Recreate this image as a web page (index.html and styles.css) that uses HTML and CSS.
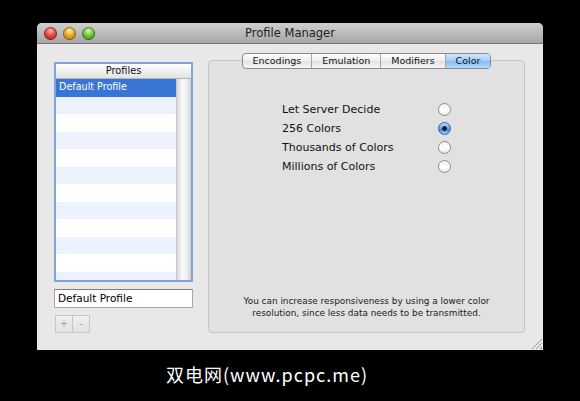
FILE: index.html
```html
<!DOCTYPE html>
<html>
<head>
    <title>Profile Manager</title>
    <link rel="stylesheet" href="styles.css">
</head>
<body>
    <div class="window">
        <div class="titlebar">
            <div class="lights">
                <span class="light red"></span>
                <span class="light yellow"></span>
                <span class="light green"></span>
            </div>
            <div class="title">Profile Manager</div>
            <div></div>
        </div>
        <div class="content">
            <div class="sidebar">
                <div class="list">
                    <div class="list-head">Profiles</div>
                    <div class="list-body">
                        <div class="rows">
                            <div class="row selected">Default Profile</div>
                            <div class="row"></div>
                            <div class="row"></div>
                            <div class="row"></div>
                            <div class="row"></div>
                            <div class="row"></div>
                            <div class="row"></div>
                            <div class="row"></div>
                            <div class="row"></div>
                            <div class="row"></div>
                            <div class="row"></div>
                            <div class="row"></div>
                        </div>
                        <div class="scroll"></div>
                    </div>
                </div>
                <div class="field">Default Profile</div>
                <div class="buttons">
                    <span class="btn">+</span>
                    <span class="btn">-</span>
                </div>
            </div>
            <div class="main">
                <div class="tabs">
                    <span class="tab">Encodings</span>
                    <span class="tab">Emulation</span>
                    <span class="tab">Modifiers</span>
                    <span class="tab active">Color</span>
                </div>
                <div class="panel">
                    <div class="options">
                        <div class="option"><span>Let Server Decide</span><span class="radio"></span></div>
                        <div class="option"><span>256 Colors</span><span class="radio checked"></span></div>
                        <div class="option"><span>Thousands of Colors</span><span class="radio"></span></div>
                        <div class="option"><span>Millions of Colors</span><span class="radio"></span></div>
                    </div>
                    <p class="note">You can increase responsiveness by using a lower color<br>resolution, since less data needs to be transmitted.</p>
                </div>
            </div>
        </div>
        <!-- resize grip sits on the window corner -->
        <div class="grip"></div>
    </div>
    <div class="caption">双电网(www.pcpc.me)</div>
</body>
</html>
```

FILE: styles.css
```css
body {
    margin: 0;
    background-color: #000;
    font-family: "DejaVu Sans", sans-serif;
    color: #111;
}

.window {
    position: relative;
    margin: 23px 0 0 37px;
    width: 506px;
    height: 327px;
    background-color: #e8e8e8;
    border-radius: 5px 5px 0 0;
    overflow: hidden;
}

.titlebar {
    height: 20px;
    display: grid;
    grid-template-columns: 1fr auto 1fr;
    align-items: center;
    background: linear-gradient(#cfcfcf, #a7a7a7);
    border-bottom: 1px solid #777;
}

.lights {
    display: flex;
    gap: 6px;
    padding-left: 7px;
}

.light {
    width: 13px;
    height: 13px;
    border-radius: 50%;
    box-shadow: inset 0 0 0 1px rgba(0, 0, 0, 0.35);
}

.red {
    background: radial-gradient(circle at 50% 30%, #ffb3a8 0, #e0463c 45%, #a51d14 100%);
}

.yellow {
    background: radial-gradient(circle at 50% 30%, #fff0a8 0, #e3a52a 45%, #a96a0a 100%);
}

.green {
    background: radial-gradient(circle at 50% 30%, #d8f7a8 0, #70c23c 45%, #3b7d14 100%);
}

.title {
    font-size: 11.5px;
    color: #222;
}

.content {
    display: flex;
    padding: 9px 18px 0 17px;
}

.sidebar {
    width: 139px;
    padding-top: 9px;
}

.list {
    height: 216px;
    border: 2px solid #7ea6dc;
    display: flex;
    flex-direction: column;
    background-color: #fff;
}

.list-head {
    height: 14px;
    line-height: 14px;
    text-align: center;
    font-size: 9.8px;
    background: linear-gradient(#fff, #e2e2e2);
    border-bottom: 1px solid #b4b4b4;
}

.list-body {
    flex: 1;
    display: flex;
    overflow: hidden;
}

.rows {
    flex: 1;
}

.row {
    height: 17.5px;
    line-height: 16px;
    padding-left: 3px;
    font-size: 9.6px;
}

.row:nth-child(even) {
    background-color: #edf3fe;
}

.row.selected {
    background-color: #3875d7;
    color: #fff;
}

.scroll {
    width: 14px;
    background: linear-gradient(to right, #d8d8d8, #fafafa 40%, #f0f0f0 70%, #d0d0d0);
    border-left: 1px solid #c8c8c8;
}

.field {
    margin-top: 7px;
    height: 17px;
    line-height: 17px;
    padding-left: 3px;
    font-size: 10.5px;
    color: #000;
    background-color: #fff;
    border: 1px solid #a8a8a8;
    border-top-color: #7e7e7e;
}

.buttons {
    display: flex;
    margin-top: 7px;
    margin-left: 1px;
}

.btn {
    width: 16px;
    height: 16px;
    line-height: 15px;
    text-align: center;
    font-size: 10px;
    color: #aaa;
    border: 1px solid #c6c6c6;
    background: linear-gradient(#f0f0f0, #e2e2e2);
}

.btn + .btn {
    border-left: none;
}

.main {
    margin-left: 15px;
    width: 317px;
    display: flex;
    flex-direction: column;
}

.tabs {
    position: relative;
    z-index: 1;
    align-self: center;
    display: flex;
    height: 16px;
    border: 1px solid #8a8a8a;
    border-radius: 4px;
    overflow: hidden;
    box-sizing: border-box;
    background: linear-gradient(#fff, #ececec 50%, #e2e2e2 51%, #f6f6f6);
}

.tab {
    padding: 0 10px;
    line-height: 14px;
    font-size: 9.5px;
    color: #111;
}

.tab + .tab {
    border-left: 1px solid #a8a8a8;
}

.tab.active {
    background: linear-gradient(#cfe6fc, #a3cdf6 50%, #85bcf2 51%, #b4dbfc);
}

.panel {
    margin-top: -9px;
    height: 271px;
    border: 1px solid #c4c4c4;
    border-radius: 4px;
    background-color: #e1e1e1;
    display: flex;
    flex-direction: column;
}

.options {
    padding: 39px 73px 0 73px;
}

.option {
    display: flex;
    justify-content: space-between;
    align-items: center;
    height: 19px;
    font-size: 11px;
}

.radio {
    width: 11px;
    height: 11px;
    border-radius: 50%;
    border: 1px solid #8c8c8c;
    background: linear-gradient(#f2f2f2, #ffffff 60%, #e6e6e6);
}

.radio.checked {
    border-color: #3c5f97;
    background: radial-gradient(circle, #101a2c 0, #101a2c 2px, transparent 2.6px),
                linear-gradient(#bcdcfa, #5aa0ea 55%, #3d86de 60%, #9fd0fb);
}

.note {
    margin: auto 0 0 0;
    padding-bottom: 13px;
    text-align: center;
    font-size: 8.9px;
    line-height: 12px;
    color: #1a1a1a;
}

.grip {
    position: absolute;
    right: 1px;
    bottom: 1px;
    width: 11px;
    height: 11px;
    background: repeating-linear-gradient(135deg, transparent 0, transparent 2px, #9a9a9a 2px, #9a9a9a 3px);
    clip-path: polygon(100% 0, 100% 100%, 0 100%);
}

.caption {
    margin: 12px 0 0 166px;
    font-family: "Noto Sans CJK SC", sans-serif;
    font-size: 18px;
    line-height: 24px;
    color: #fff;
    letter-spacing: 1px;
}
```
